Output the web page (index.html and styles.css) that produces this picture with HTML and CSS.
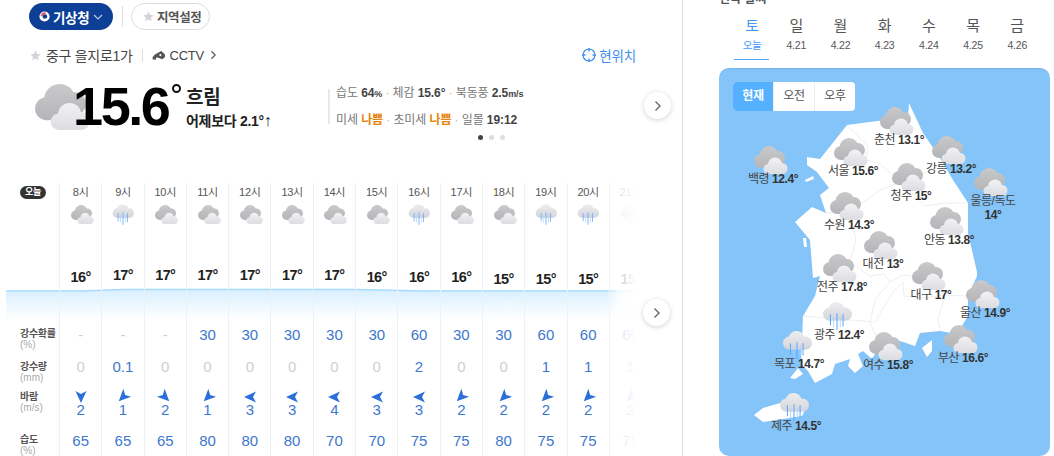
FILE: index.html
```html
<!DOCTYPE html>
<html lang="ko">
<head>
<meta charset="utf-8">
<title>날씨</title>
<link rel="stylesheet" href="styles.css">
</head>
<body>
<svg class="defs" aria-hidden="true">
  <defs>
    <linearGradient id="gDark" gradientUnits="userSpaceOnUse" x1="0" y1="0" x2="0" y2="22"><stop offset="0" stop-color="#c9c9cb"/><stop offset="1" stop-color="#b4b5b8"/></linearGradient>
    <linearGradient id="gLight" gradientUnits="userSpaceOnUse" x1="0" y1="12" x2="0" y2="28"><stop offset="0" stop-color="#f1f1f3"/><stop offset="1" stop-color="#dcdde1"/></linearGradient>
    <linearGradient id="gRainCloud" gradientUnits="userSpaceOnUse" x1="0" y1="0" x2="0" y2="20"><stop offset="0" stop-color="#eeeef0"/><stop offset="1" stop-color="#d3d4da"/></linearGradient>
    <symbol id="cloud" viewBox="0 0 34 28">
      <g fill="url(#gDark)"><circle cx="7" cy="15" r="7"/><circle cx="15" cy="9.5" r="9.5"/><circle cx="24" cy="12" r="7"/><rect x="7" y="12" width="18" height="10"/></g>
      <g fill="url(#gLight)"><circle cx="14.500" cy="23" r="5"/><circle cx="21" cy="18.500" r="7"/><circle cx="28" cy="22.500" r="5.500"/><rect x="14.500" y="20" width="14" height="8"/></g>
    </symbol>
    <symbol id="rain" viewBox="0 0 32 30">
      <g fill="url(#gRainCloud)"><circle cx="8" cy="13" r="7"/><circle cx="15.500" cy="9" r="9"/><circle cx="25" cy="13" r="7"/><rect x="8" y="10" width="17" height="10"/></g>
      <g stroke="#5aa8ff" stroke-width="1.100"><path d="M9 13v12M16 12v18M22.500 13v13"/></g>
      <g stroke="#a6d0ff" stroke-width=".9"><path d="M12.500 16v11M19.500 16v11"/></g>
    </symbol>
    <symbol id="arrow" viewBox="0 0 12 12"><path d="M6 0 11.500 12 6 9 .5 12Z"/></symbol>
    <symbol id="star" viewBox="0 0 12 12"><path d="M6 .5 7.700 4.200 11.700 4.600 8.700 7.300 9.500 11.300 6 9.300 2.500 11.300 3.300 7.300.3 4.600 4.300 4.200Z"/></symbol>
    <symbol id="chev" viewBox="0 0 8 12"><path d="M1.500 1.500 6 6 1.500 10.500" fill="none" stroke="currentColor" stroke-width="1.400"/></symbol>
  </defs>
</svg>

<div class="page">
  <main class="left">
    <div class="topbar">
      <button class="pill-kma">
        <svg class="logo" viewBox="0 0 14 14"><circle cx="7" cy="7" r="6.500" fill="#fff"/><circle cx="7.500" cy="7" r="3" fill="#0d3f97"/><path d="M2 6.500A5 5 0 0 1 9 2L8 4.500A3 3 0 0 0 4.500 6Z" fill="#e0566a"/></svg>
        <span>기상청</span>
        <svg class="down" viewBox="0 0 10 6"><path d="M1 1 5 5 9 1" fill="none" stroke="currentColor" stroke-width="1.200"/></svg>
      </button>
      <span class="sep-tall"></span>
      <button class="pill-area"><svg class="star"><use href="#star"/></svg>지역설정</button>
    </div>

    <div class="locrow">
      <svg class="star"><use href="#star"/></svg>
      <span class="place">중구 을지로1가</span>
      <span class="sep-short"></span>
      <svg class="cctv" viewBox="0 0 15 12"><path d="M.5 8 3 5 10 1 14 5 14 8 11 10 5 8 3.500 11 .5 10Z" fill="#555"/><circle cx="9" cy="5.500" r="1.200" fill="#fff"/></svg>
      <span class="cctv-text">CCTV</span>
      <svg class="chev-small"><use href="#chev"/></svg>
      <span class="here">
        <svg class="target" viewBox="0 0 14 14"><circle cx="7" cy="7" r="6" fill="none" stroke="#3f8cf0" stroke-width="1.200"/><path d="M7 0v3.500M7 10.500V14M0 7h3.500M10.500 7H14" stroke="#3f8cf0" stroke-width="1.400"/></svg>
        현위치
      </span>
    </div>

    <section class="current">
      <div class="now">
        <svg class="big-cloud"><use href="#cloud"/></svg>
        <div class="big-temp">15.6<span class="deg"></span></div>
        <div class="cond">
          <div class="cond-main">흐림</div>
          <div class="cond-sub">어제보다 2.1°<span class="up">↑</span></div>
        </div>
      </div>
      <div class="details-wrap">
        <div class="details">
          <p>습도 <b>64<small>%</small></b> <i>·</i> 체감 <b>15.6°</b> <i>·</i> 북동풍 <b>2.5<small>m/s</small></b></p>
          <p>미세 <b class="bad">나쁨</b> <i>·</i> 초미세 <b class="bad">나쁨</b> <i>·</i> 일몰 <b>19:12</b></p>
        </div>
        <div class="dots"><span class="dot on"></span><span class="dot"></span><span class="dot"></span></div>
      </div>
    </section>

    <section class="hourly">
      <svg class="chart" viewBox="0 0 630 36" preserveAspectRatio="none">
        <defs><linearGradient id="gChart" x1="0" y1="0" x2="0" y2="1"><stop offset="0" stop-color="#d8efff"/><stop offset=".85" stop-color="#fff"/></linearGradient></defs>
        <path d="M0 3H75L117 1.500H349L420 3H630V36H0Z" fill="url(#gChart)"/>
        <path d="M0 3H75L117 1.500H349L420 3H630" fill="none" stroke="#a6dbff" stroke-width="1.600"/>
      </svg>

      <div class="labels">
        <div class="c-hour"><span class="badge">오늘</span></div>
        <div class="c-icon"></div>
        <div class="c-temp"></div>
        <div class="c-chart"></div>
        <div class="c-rain"><b>강수확률</b><small>(%)</small></div>
        <div class="c-amt"><b>강수량</b><small>(mm)</small></div>
        <div class="c-wind"><b>바람</b><small>(m/s)</small></div>
        <div class="c-hum"><b>습도</b><small>(%)</small></div>
      </div>

      <div class="col"><div class="c-hour">8시</div><div class="c-icon"><svg class="ico"><use href="#cloud"/></svg></div><div class="c-temp t16">16°</div><div class="c-chart"></div><div class="c-rain none">-</div><div class="c-amt none">0</div><div class="c-wind"><svg class="arrow dir-s"><use href="#arrow"/></svg>2</div><div class="c-hum">65</div></div>
      <div class="col"><div class="c-hour">9시</div><div class="c-icon"><svg class="ico-r"><use href="#rain"/></svg></div><div class="c-temp t17">17°</div><div class="c-chart"></div><div class="c-rain none">-</div><div class="c-amt">0.1</div><div class="c-wind"><svg class="arrow dir-sw"><use href="#arrow"/></svg>1</div><div class="c-hum">65</div></div>
      <div class="col"><div class="c-hour">10시</div><div class="c-icon"><svg class="ico"><use href="#cloud"/></svg></div><div class="c-temp t17">17°</div><div class="c-chart"></div><div class="c-rain none">-</div><div class="c-amt none">0</div><div class="c-wind"><svg class="arrow dir-se"><use href="#arrow"/></svg>2</div><div class="c-hum">65</div></div>
      <div class="col"><div class="c-hour">11시</div><div class="c-icon"><svg class="ico"><use href="#cloud"/></svg></div><div class="c-temp t17">17°</div><div class="c-chart"></div><div class="c-rain">30</div><div class="c-amt none">0</div><div class="c-wind"><svg class="arrow dir-sw"><use href="#arrow"/></svg>1</div><div class="c-hum">80</div></div>
      <div class="col"><div class="c-hour">12시</div><div class="c-icon"><svg class="ico"><use href="#cloud"/></svg></div><div class="c-temp t17">17°</div><div class="c-chart"></div><div class="c-rain">30</div><div class="c-amt none">0</div><div class="c-wind"><svg class="arrow dir-w"><use href="#arrow"/></svg>3</div><div class="c-hum">80</div></div>
      <div class="col"><div class="c-hour">13시</div><div class="c-icon"><svg class="ico"><use href="#cloud"/></svg></div><div class="c-temp t17">17°</div><div class="c-chart"></div><div class="c-rain">30</div><div class="c-amt none">0</div><div class="c-wind"><svg class="arrow dir-w"><use href="#arrow"/></svg>3</div><div class="c-hum">80</div></div>
      <div class="col"><div class="c-hour">14시</div><div class="c-icon"><svg class="ico"><use href="#cloud"/></svg></div><div class="c-temp t17">17°</div><div class="c-chart"></div><div class="c-rain">30</div><div class="c-amt none">0</div><div class="c-wind"><svg class="arrow dir-w"><use href="#arrow"/></svg>4</div><div class="c-hum">70</div></div>
      <div class="col"><div class="c-hour">15시</div><div class="c-icon"><svg class="ico"><use href="#cloud"/></svg></div><div class="c-temp t16">16°</div><div class="c-chart"></div><div class="c-rain">30</div><div class="c-amt none">0</div><div class="c-wind"><svg class="arrow dir-w"><use href="#arrow"/></svg>3</div><div class="c-hum">70</div></div>
      <div class="col"><div class="c-hour">16시</div><div class="c-icon"><svg class="ico-r"><use href="#rain"/></svg></div><div class="c-temp t16">16°</div><div class="c-chart"></div><div class="c-rain">60</div><div class="c-amt">2</div><div class="c-wind"><svg class="arrow dir-w"><use href="#arrow"/></svg>3</div><div class="c-hum">75</div></div>
      <div class="col"><div class="c-hour">17시</div><div class="c-icon"><svg class="ico"><use href="#cloud"/></svg></div><div class="c-temp t16">16°</div><div class="c-chart"></div><div class="c-rain">30</div><div class="c-amt none">0</div><div class="c-wind"><svg class="arrow dir-sw"><use href="#arrow"/></svg>2</div><div class="c-hum">75</div></div>
      <div class="col"><div class="c-hour">18시</div><div class="c-icon"><svg class="ico"><use href="#cloud"/></svg></div><div class="c-temp t15">15°</div><div class="c-chart"></div><div class="c-rain">30</div><div class="c-amt none">0</div><div class="c-wind"><svg class="arrow dir-sw"><use href="#arrow"/></svg>2</div><div class="c-hum">80</div></div>
      <div class="col"><div class="c-hour">19시</div><div class="c-icon"><svg class="ico-r"><use href="#rain"/></svg></div><div class="c-temp t15">15°</div><div class="c-chart"></div><div class="c-rain">60</div><div class="c-amt">1</div><div class="c-wind"><svg class="arrow dir-sw"><use href="#arrow"/></svg>2</div><div class="c-hum">75</div></div>
      <div class="col"><div class="c-hour">20시</div><div class="c-icon"><svg class="ico-r"><use href="#rain"/></svg></div><div class="c-temp t15">15°</div><div class="c-chart"></div><div class="c-rain">60</div><div class="c-amt">1</div><div class="c-wind"><svg class="arrow dir-sw"><use href="#arrow"/></svg>2</div><div class="c-hum">75</div></div>
      <div class="col"><div class="c-hour">21시</div><div class="c-icon"><svg class="ico-r"><use href="#rain"/></svg></div><div class="c-temp t15">15°</div><div class="c-chart"></div><div class="c-rain">60</div><div class="c-amt">1</div><div class="c-wind"><svg class="arrow dir-sw"><use href="#arrow"/></svg>2</div><div class="c-hum">75</div></div>

      <div class="fade"></div>
    </section>

    <button class="next next-top"><svg class="next-chev"><use href="#chev"/></svg></button>
    <button class="next next-bottom"><svg class="next-chev"><use href="#chev"/></svg></button>
  </main>

  <aside class="right">
    <h2 class="clipped">전국 날씨</h2>
    <nav class="days">
      <div class="day active"><span class="d">토</span><span class="n">오늘</span></div>
      <div class="day"><span class="d">일</span><span class="n">4.21</span></div>
      <div class="day"><span class="d">월</span><span class="n">4.22</span></div>
      <div class="day"><span class="d">화</span><span class="n">4.23</span></div>
      <div class="day"><span class="d">수</span><span class="n">4.24</span></div>
      <div class="day"><span class="d">목</span><span class="n">4.25</span></div>
      <div class="day"><span class="d">금</span><span class="n">4.26</span></div>
    </nav>

    <div class="map">
      <svg class="land" viewBox="719 68 331 388">
        <g fill="#fff">
          <path d="M909 103 923 133 940 158 953 180 968 203 968 233 977 272 977 276 968 296 968 316 957 334 940 331 920 333 915 346 900 341 880 346 872 359 863 351 858 354 863 366 855 373 848 366 850 359 835 364 832 374 815 383 808 371 801 364 803 316 815 296 820 276 813 278 810 240 795 222 812 207 826 213 820 195 829 188 817 172 807 165 807 157 820 159 847 125 870 122 908 117Z"/>
          <path d="M805 180 813 176 814 179 806 182Z"/>
          <path d="M803 238 806 238 807 247 804 247Z"/>
          <path d="M922 348 932 340 932 351 927 357Z"/>
          <path d="M790 378 798 368 803 374 795 379Z"/>
          <path d="M754 415 763 408 787 401 808 404 802 416 763 422Z"/>
        </g>
        <g fill="none" stroke="#eeeff2" stroke-width="1">
          <path d="M847 125 868 146 866 160 880 164 900 182 921 175 945 162"/>
          <path d="M826 213 850 212 880 190 900 182 925 206 945 203 968 203"/>
          <path d="M850 212 856 240 850 262 870 276 884 274 890 282 875 300 870 322 880 346"/>
          <path d="M903 282 893 292 875 322 850 320 803 316"/>
          <path d="M890 282 903 275 925 278 945 295 968 296"/>
          <path d="M903 282 904 296 925 298 945 295 938 320 940 331"/>
        </g>
      </svg>

      <div class="map-tabs"><span class="mt on">현재</span><span class="mt">오전</span><span class="mt">오후</span></div>

      <div class="pin p-baek"><svg class="pin-ico"><use href="#cloud"/></svg><div class="pin-label">백령 <b>12.4°</b></div></div>
      <div class="pin p-chun"><svg class="pin-ico"><use href="#cloud"/></svg><div class="pin-label">춘천 <b>13.1°</b></div></div>
      <div class="pin p-seoul"><svg class="pin-ico"><use href="#cloud"/></svg><div class="pin-label">서울 <b>15.6°</b></div></div>
      <div class="pin p-gang"><svg class="pin-ico"><use href="#cloud"/></svg><div class="pin-label">강릉 <b>13.2°</b></div></div>
      <div class="pin p-cheong"><svg class="pin-ico"><use href="#cloud"/></svg><div class="pin-label">청주 <b>15°</b></div></div>
      <div class="pin p-ul"><svg class="pin-ico"><use href="#cloud"/></svg><div class="pin-label">울릉/독도<br><b>14°</b></div></div>
      <div class="pin p-suwon"><svg class="pin-ico"><use href="#cloud"/></svg><div class="pin-label">수원 <b>14.3°</b></div></div>
      <div class="pin p-andong"><svg class="pin-ico"><use href="#cloud"/></svg><div class="pin-label">안동 <b>13.8°</b></div></div>
      <div class="pin p-dj"><svg class="pin-ico"><use href="#cloud"/></svg><div class="pin-label">대전 <b>13°</b></div></div>
      <div class="pin p-jj"><svg class="pin-ico"><use href="#cloud"/></svg><div class="pin-label">전주 <b>17.8°</b></div></div>
      <div class="pin p-dg"><svg class="pin-ico"><use href="#cloud"/></svg><div class="pin-label">대구 <b>17°</b></div></div>
      <div class="pin p-us"><svg class="pin-ico"><use href="#cloud"/></svg><div class="pin-label">울산 <b>14.9°</b></div></div>
      <div class="pin p-gj"><svg class="pin-ico"><use href="#rain"/></svg><div class="pin-label">광주 <b>12.4°</b></div></div>
      <div class="pin p-ys"><svg class="pin-ico"><use href="#cloud"/></svg><div class="pin-label">여수 <b>15.8°</b></div></div>
      <div class="pin p-bs"><svg class="pin-ico"><use href="#cloud"/></svg><div class="pin-label">부산 <b>16.6°</b></div></div>
      <div class="pin p-mp"><svg class="pin-ico"><use href="#rain"/></svg><div class="pin-label">목포 <b>14.7°</b></div></div>
      <div class="pin p-jeju"><svg class="pin-ico"><use href="#rain"/></svg><div class="pin-label">제주 <b>14.5°</b></div></div>
    </div>
  </aside>
</div>
</body>
</html>
```

FILE: styles.css
```css
* { box-sizing: border-box; }
html, body { margin: 0; padding: 0; height: 456px; overflow: hidden; background: #fff; }
body { font-family: "Liberation Sans", "Noto Sans CJK KR", sans-serif; color: #333; }
button { font: inherit; cursor: pointer; }
p, h2 { margin: 0; }
i { font-style: normal; }
.defs { position: absolute; width: 0; height: 0; }

.page { display: flex; height: 456px; overflow: hidden; }
.left { position: relative; width: 683px; flex: none; border-right: 1px solid #dedede; }
.right { flex: 1; padding-left: 36px; min-width: 0; }

/* top bar */
.topbar { display: flex; align-items: center; height: 27px; margin-top: 3px; padding-left: 29px; }
.pill-kma { display: flex; align-items: center; width: 84px; height: 27px; padding: 0 0 0 10px; border: 0; border-radius: 14px; background: #0d3f97; color: #fff; font-size: 13.500px; font-weight: 700; letter-spacing: -.3px; }
.logo { width: 11px; height: 11px; margin-right: 3px; }
.down { width: 10px; height: 6px; margin-left: 4px; color: #b8c8e6; }
.sep-tall { width: 1px; height: 21px; margin: 0 8px 0 9px; background: #ddd; }
.pill-area { display: flex; align-items: center; width: 79px; height: 27px; padding: 0 0 0 11px; border: 1px solid #dcdcdc; border-radius: 14px; background: #fff; color: #555; font-size: 12.500px; font-weight: 700; letter-spacing: -.4px; }
.star { width: 11px; height: 11px; margin-right: 3px; fill: #d5d5d8; flex: none; }

/* location */
.locrow { display: flex; align-items: center; height: 22px; margin-top: 14px; padding: 0 46px 0 30px; font-size: 14px; color: #444; }
.place { margin-left: 2px; letter-spacing: -.3px; }
.sep-short { width: 1px; height: 13px; margin: 0 9px; background: #ddd; }
.cctv { width: 14px; height: 11px; margin-right: 4px; }
.cctv-text { font-size: 13px; letter-spacing: -.3px; }
.chev-small { width: 7px; height: 10px; margin-left: 6px; color: #555; }
.here { display: flex; align-items: center; margin-left: auto; color: #3f8cf0; font-size: 13.500px; letter-spacing: -.2px; }
.target { width: 14px; height: 14px; margin-right: 3px; }

/* current */
.current { display: flex; height: 117px; }
.now { display: flex; width: 328px; flex: none; padding-left: 35px; }
.big-cloud { width: 56px; height: 46px; margin: 18px -18px 0 0; flex: none; }
.big-temp { position: relative; width: 113px; margin-top: 10px; font-size: 54px; line-height: 60px; font-weight: 700; letter-spacing: -2.400px; color: #000; }
.deg { position: absolute; left: 99px; top: 8px; width: 9px; height: 9px; border: 2px solid #111; border-radius: 50%; }
.cond { color: #222; font-weight: 700; }
.cond-main { margin-top: 21px; font-size: 19px; line-height: 22px; letter-spacing: -.2px; }
.cond-sub { margin-top: 3px; font-size: 14px; line-height: 18px; letter-spacing: -.3px; white-space: nowrap; }
.up { font-weight: 400; font-size: 16px; line-height: 16px; }
.details-wrap { margin-top: 23px; }
.details { height: 35px; padding-left: 6px; border-left: 2px solid #e8e8e8; font-size: 12px; color: #777; display: flex; flex-direction: column; justify-content: space-between; letter-spacing: -.1px; }
.details p { line-height: 14px; white-space: nowrap; margin-top: -3px; }
.details p + p { margin-top: 0; margin-bottom: -3px; }
.details b { color: #444; }
.details small { font-size: 9px; }
.details i { color: #bbb; }
.details .bad { color: #e8830f; }
.dots { display: flex; gap: 6px; margin: 11px 0 0 150px; }
.dot { width: 5px; height: 5px; border-radius: 50%; background: #ddd; }
.dot.on { background: #444; }

/* hourly */
.hourly { position: relative; display: flex; width: 636px; height: 273px; overflow: hidden; }
.labels { width: 59px; flex: none; padding-left: 20px; position: relative; }
.labels b { display: block; font-size: 10px; line-height: 11px; color: #555; letter-spacing: -.3px; white-space: nowrap; }
.labels small { display: block; font-size: 10px; line-height: 11px; color: #aaa; }
.col { position: relative; width: 42.300px; flex: none; border-left: 1px solid #eff0f2; text-align: center; color: #3d77cf; font-size: 15px; line-height: 16px; }
.c-hour { height: 16px; font-size: 11px; line-height: 18px; color: #555; letter-spacing: -.3px; }
.c-icon { height: 31px; padding-top: 4px; display: flex; justify-content: center; align-items: flex-start; }
.c-temp { height: 56px; font-size: 14.500px; font-weight: 700; color: #222; letter-spacing: -.6px; position: relative; }
.t17 { padding-top: 37px; }
.t16 { padding-top: 39px; }
.t15 { padding-top: 41px; }
.c-chart { height: 36px; }
.c-rain { height: 28px; padding-top: 5px; }
.c-amt { height: 32px; padding-top: 9px; }
.c-wind { height: 43px; padding-top: 9px; line-height: 14px; color: #3d77cf; }
.c-hum { height: 31px; padding-top: 8px; }
.labels .c-rain { padding-top: 3px; }
.labels .c-amt { padding-top: 8px; }
.labels .c-wind { padding-top: 6px; }
.labels .c-hum { padding-top: 6px; }
.none { color: #cfcfcf; }
.ico { display: block; width: 23px; height: 19px; margin: 2px 0 0 3px; }
.ico-r { display: block; width: 22px; height: 23px; }
.arrow { display: block; width: 12px; height: 12px; margin: 0 auto; fill: #2b70d8; }
.dir-s { transform: rotate(180deg); }
.dir-sw { transform: rotate(225deg); }
.dir-se { transform: rotate(135deg); }
.dir-w { transform: rotate(270deg); }
.chart { position: absolute; left: 6px; top: 105px; width: 630px; height: 36px; }
.fade { position: absolute; right: 0; top: 0; width: 30px; height: 100%; background: linear-gradient(to right, rgba(255,255,255,0), rgba(255,255,255,.78) 40%, #fff); }
.badge { display: block; width: 26px; height: 13px; margin-top: 3px; border-radius: 7px; background: #333; color: #fff; font-size: 9px; line-height: 13px; font-weight: 700; text-align: center; letter-spacing: -.3px; }

.next { position: absolute; width: 27px; height: 27px; padding: 0; border: 0; border-radius: 50%; background: #fff; box-shadow: 0 1px 5px rgba(0,0,0,.18); display: flex; align-items: center; justify-content: center; color: #666; }
.next-chev { width: 8px; height: 12px; }
.next-top { left: 644px; top: 92px; }
.next-bottom { left: 643px; top: 299px; }

/* right */
.clipped { height: 17px; margin-top: -8px; font-size: 12px; line-height: 14px; color: #555; margin-bottom: 8px; }
.days { display: flex; margin-left: 11px; }
.day { position: relative; width: 44.200px; height: 43px; display: flex; flex-direction: column; align-items: center; color: #555; }
.d { font-size: 15px; line-height: 18px; }
.n { margin-top: 3px; font-size: 10.500px; line-height: 14px; letter-spacing: -.2px; }
.day.active { color: #3e9bf8; }
.day.active::after { content: ""; position: absolute; left: 4px; right: 5px; bottom: 0; height: 1.500px; background: #4aa8ff; }

.map { position: relative; width: 331px; height: 388px; margin-top: 8px; border-radius: 10px; background: #84c4f8; border-top: 1px solid #6fb4ec; overflow: hidden; }
.land { position: absolute; left: 0; top: -1px; width: 331px; height: 388px; }
.map-tabs { position: absolute; left: 14px; top: 13px; display: flex; height: 29px; border-radius: 4px; background: #fff; overflow: hidden; }
.mt { width: 41px; font-size: 12px; line-height: 29px; text-align: center; color: #555; border-left: 1px solid #eee; letter-spacing: -.3px; }
.mt.on { width: 40px; border-left: 0; background: #55b0ff; color: #fff; font-weight: 700; }

.pin { position: absolute; width: 90px; display: flex; flex-direction: column; align-items: center; margin-top: -1px; }
.pin-ico { display: block; width: 34px; height: 28px; margin: 0 4px -2px 0; }
.pin-label { font-size: 12px; line-height: 14px; text-align: center; color: #444; letter-spacing: -.45px; white-space: nowrap; }
.pin-label b { color: #333; }
.p-baek { left: 9px; top: 78px; }
.p-chun { left: 135px; top: 39px; }
.p-seoul { left: 89px; top: 70px; }
.p-gang { left: 187px; top: 68px; }
.p-cheong { left: 147px; top: 95px; }
.p-ul { left: 229px; top: 100px; }
.p-suwon { left: 85px; top: 124px; }
.p-andong { left: 185px; top: 139px; }
.p-dj { left: 119px; top: 163px; }
.p-jj { left: 78px; top: 186px; }
.p-dg { left: 167px; top: 194px; }
.p-us { left: 221px; top: 212px; }
.p-gj { left: 75px; top: 234px; }
.p-ys { left: 124px; top: 264px; }
.p-bs { left: 199px; top: 257px; }
.p-mp { left: 35px; top: 263px; }
.p-jeju { left: 32px; top: 325px; }
```
